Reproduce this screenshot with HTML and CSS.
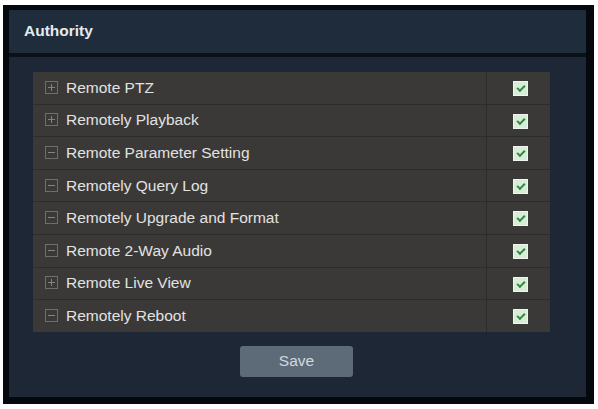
FILE: index.html
```html
<!DOCTYPE html>
<html lang="en">
<head>
  <meta charset="UTF-8">
  <title>Authority</title>
  <link rel="stylesheet" href="styles.css">
</head>
<body>
  <div class="frame">
    <div class="panel">
      <div class="panel-head">Authority</div>
      <div class="panel-body">
        <table class="auth-table">
          <tr><td class="name"><span class="tree plus"></span>Remote PTZ</td><td class="chk"><span class="box"></span></td></tr>
          <tr><td class="name"><span class="tree plus"></span>Remotely Playback</td><td class="chk"><span class="box"></span></td></tr>
          <tr><td class="name"><span class="tree"></span>Remote Parameter Setting</td><td class="chk"><span class="box"></span></td></tr>
          <tr><td class="name"><span class="tree"></span>Remotely Query Log</td><td class="chk"><span class="box"></span></td></tr>
          <tr><td class="name"><span class="tree"></span>Remotely Upgrade and Format</td><td class="chk"><span class="box"></span></td></tr>
          <tr><td class="name"><span class="tree"></span>Remote 2-Way Audio</td><td class="chk"><span class="box"></span></td></tr>
          <tr><td class="name"><span class="tree plus"></span>Remote Live View</td><td class="chk"><span class="box"></span></td></tr>
          <tr><td class="name"><span class="tree"></span>Remotely Reboot</td><td class="chk"><span class="box"></span></td></tr>
        </table>
        <div class="actions">
          <button class="save">Save</button>
        </div>
      </div>
    </div>
  </div>
</body>
</html>
```

FILE: styles.css
```css
body {
  margin: 0;
  background: #fff;
  font-family: "Liberation Sans", Arial, sans-serif;
}

.frame {
  margin: 5px 4px 4px 3px;
  background: #05080c;
  padding: 5px 8px 7px 6px;
}

.panel {
  background: #1d2735;
}

.panel-head {
  height: 43px;
  line-height: 42px;
  padding-left: 15px;
  background: #1f2c3b;
  border-bottom: 4px solid #0b1118;
  color: #e6eaee;
  font-size: 15.5px;
  font-weight: bold;
}

.panel-body {
  padding: 15px 36px 20px 24px;
}

.auth-table {
  width: 517px;
  border-collapse: collapse;
  background: #3a3937;
}

.auth-table td {
  height: 31.6px;
  border-bottom: 1.5px solid #2c2c2b;
  padding: 0;
}

.auth-table tr:last-child td {
  border-bottom: none;
}

.auth-table .name {
  color: #e2e2e2;
  font-size: 15.5px;
  padding-left: 12px;
  border-right: 1.5px solid #2c2c2b;
}

.auth-table .chk {
  width: 63px;
  text-align: center;
}

.tree {
  display: inline-block;
  position: relative;
  width: 11px;
  height: 11px;
  border: 1px solid #6f6e6a;
  margin-right: 8px;
  vertical-align: -1px;
}

.tree::before {
  content: "";
  position: absolute;
  left: 2px;
  right: 2px;
  top: 5px;
  height: 1px;
  background: #85847f;
}

.tree.plus::after {
  content: "";
  position: absolute;
  top: 2px;
  bottom: 2px;
  left: 5px;
  width: 1px;
  background: #85847f;
}

.box {
  display: inline-block;
  position: relative;
  width: 13px;
  height: 13px;
  background: #d8ecd8;
  border: 1px solid #eef6ee;
  vertical-align: middle;
  margin-left: 4px;
}

.box::after {
  content: "";
  position: absolute;
  left: 3px;
  top: 3px;
  width: 6px;
  height: 3px;
  border-left: 2px solid #2e8a3e;
  border-bottom: 2px solid #2e8a3e;
  transform: rotate(-45deg);
}

.actions {
  display: flex;
  justify-content: center;
  padding-top: 14px;
  padding-left: 10px;
}

.save {
  width: 113px;
  height: 31px;
  border: none;
  border-radius: 3px;
  background: #5d6b79;
  color: #d2d8de;
  font-family: "Liberation Sans", Arial, sans-serif;
  font-size: 15.5px;
}
```
